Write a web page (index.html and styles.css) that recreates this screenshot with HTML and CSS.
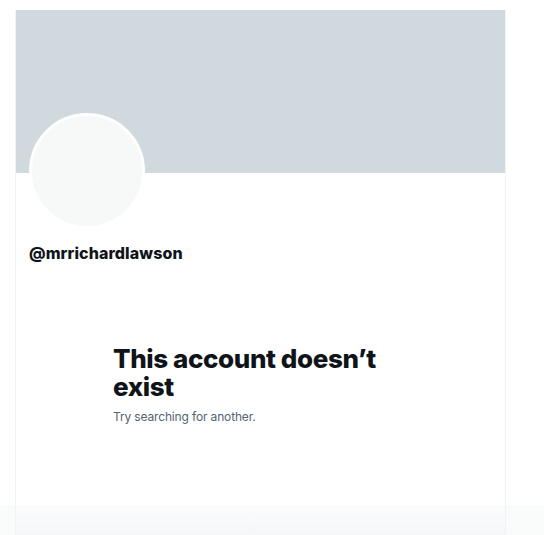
FILE: index.html
```html
<!DOCTYPE html>
<html lang="en">
<head>
    <meta charset="UTF-8">
    <meta name="viewport" content="width=device-width, initial-scale=1.0">
    <title>Profile</title>
    <link rel="stylesheet" href="styles.css">
</head>
<body>
    <div class="page">
        <main class="column">
            <div class="banner"></div>
            <div class="profile-head">
                <div class="avatar"></div>
            </div>
            <div class="handle">@mrrichardlawson</div>

            <!-- Empty state -->
            <div class="empty">
                <h1>This account doesn’t exist</h1>
                <p>Try searching for another.</p>
            </div>
        </main>
        <aside class="sidebar"></aside>
    </div>
    <div class="bottom-bar"></div>
</body>
</html>
```

FILE: styles.css
```css
:root {
    --banner: #cfd9de;
    --border: #eff3f4;
    --text: #0f1419;
    --muted: #536471;
    --avatar: #f7f9f9;
}

* {
    margin: 0;
    padding: 0;
    box-sizing: border-box;
}

body {
    background: #fff;
    font-family: Inter, 'Noto Sans', sans-serif;
    color: var(--text);
    height: 535px;
    overflow: hidden;
}

.page {
    display: flex;
    padding-left: 15px;
    padding-top: 10px;
    height: 505px;
}

.column {
    width: 491px;
    border-left: 1px solid var(--border);
    border-right: 1px solid var(--border);
    display: flex;
    flex-direction: column;
}

.banner {
    height: 163px;
    background: var(--banner);
}

.profile-head {
    height: 0;
    padding-left: 13px;
}

.avatar {
    width: 116px;
    height: 116px;
    margin-top: -60px;
    border-radius: 50%;
    background: var(--avatar);
    border: 3px solid #fff;
}

.handle {
    margin-top: 70px;
    padding-left: 13px;
    font-size: 16px;
    font-weight: 800;
    letter-spacing: 0.1px;
}

.empty {
    margin-top: 82px;
    padding-left: 97px;
}

.empty h1 {
    width: 280px;
    font-size: 26px;
    font-weight: 800;
    line-height: 28px;
    letter-spacing: -0.4px;
}

.empty p {
    margin-top: 8px;
    font-size: 12px;
    letter-spacing: -0.15px;
    color: var(--muted);
}

.sidebar {
    flex: 1;
}

.bottom-bar {
    height: 30px;
    margin-left: 15px;
    width: 491px;
    background: linear-gradient(#fcfcfd, #f5f7f8);
    border-left: 1px solid var(--border);
    border-right: 1px solid var(--border);
    box-shadow: -15px 0 0 #fafbfb, 38px 0 0 #fafbfb;
}
```
